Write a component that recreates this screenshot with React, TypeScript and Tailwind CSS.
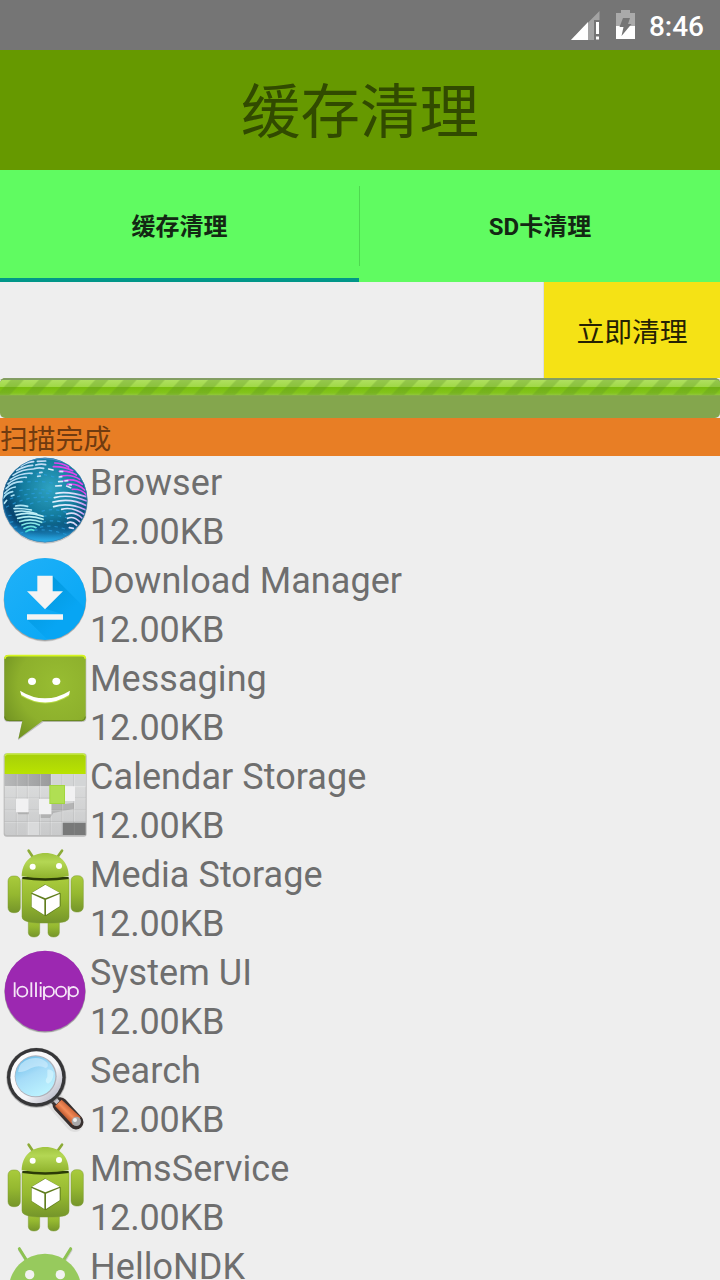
import type { ReactNode } from "react";

function Icon({ children, y = 6 }: { children: ReactNode; y?: number }) {
  return (
    <svg className="h-[98px] w-[90px] shrink-0" viewBox={`0 ${y} 270 294`}>
      {children}
    </svg>
  );
}

function Globe() {
  return (
    <Icon>
      <defs>
        <radialGradient id="globe" cx="0.56" cy="0.36" r="0.66">
          <stop offset="0" stopColor="#2fa3c2" />
          <stop offset="0.5" stopColor="#147c9e" />
          <stop offset="0.82" stopColor="#07456f" />
          <stop offset="1" stopColor="#1470ae" />
        </radialGradient>
        <linearGradient id="globeGlow" x1="0" y1="0" x2="0" y2="1">
          <stop offset="0.78" stopColor="#1c8fd0" stopOpacity="0" />
          <stop offset="1" stopColor="#2cb4ee" />
        </linearGradient>
        <linearGradient id="landWest" gradientUnits="userSpaceOnUse" x1="90" y1="20" x2="70" y2="240">
          <stop offset="0" stopColor="#c5dcf5" />
          <stop offset="0.5" stopColor="#a5e0f4" />
          <stop offset="0.75" stopColor="#c2f0f6" />
          <stop offset="1" stopColor="#2fdccf" />
        </linearGradient>
        <linearGradient id="landEast" gradientUnits="userSpaceOnUse" x1="160" y1="0" x2="262" y2="0">
          <stop offset="0" stopColor="#e2f4ff" />
          <stop offset="0.6" stopColor="#dcdcfa" />
          <stop offset="1" stopColor="#c387f2" />
        </linearGradient>
        <clipPath id="globeClip"><circle cx="135" cy="138" r="126" /></clipPath>
      </defs>
      <circle cx="135" cy="141" r="128" fill="#000" opacity="0.18" />
      <circle cx="135" cy="138" r="127" fill="url(#globe)" />
      <circle cx="135" cy="138" r="127" fill="url(#globeGlow)" />
      <g clipPath="url(#globeClip)" fill="none">
        <g stroke="#2a9fe0" strokeWidth="3.5" strokeDasharray="10 12" opacity="0.7">
          <path d="M66 62Q130 52 200 82M60 86Q130 76 170 92M58 110Q120 98 165 116M18 160Q90 120 160 132M30 135Q100 110 160 120M90 150Q130 136 160 146" />
          <path d="M125 172Q160 160 205 177M130 188Q160 178 205 193M128 205Q160 194 205 210M120 220Q155 210 200 227M25 185L48 182M30 205L54 200M42 220L65 217M60 238Q120 215 200 242" />
        </g>
        <path d="M83 18Q135 2 185 20" stroke="#5d9ad8" strokeWidth="9" opacity="0.8" />
        <g stroke="url(#landWest)" strokeWidth="5" strokeLinecap="round">
          <path d="M63 36Q80 24 101 23M50 50Q72 36 98 34M39 64Q67 45 100 45M31 77Q62 55 96 58M24 90Q50 68 79 70M18 104Q38 82 66 83M14 118Q28 101 46 99M10 132Q20 116 38 113M34 126L42 123M13 148L20 139" />
          <path d="M112 22L137 21M107 33Q124 28 137 32M103 44Q116 40 131 43M119 56L126 55M113 67L121 66" />
          <path d="M47 156Q61 152 83 157M42 164Q65 162 94 168M45 173Q75 167 110 179M49 183Q85 172 129 187M53 193Q92 181 129 196M59 203Q93 191 125 205M66 213Q93 201 118 213M72 223Q91 212 108 221M78 233Q91 223 101 229" />
        </g>
        <g stroke="url(#landEast)" strokeWidth="5" strokeLinecap="round">
          <path d="M168 118Q205 111 258 128M163 131Q210 119 260 141M159 144Q212 130 260 155M161 158Q206 144 258 168M185 166Q216 157 252 181M200 180Q224 171 246 192M203 193Q220 185 239 203M202 207Q216 200 230 214M208 221L220 223" />
          <path d="M167 96L184 95M176 83L188 82M200 96L212 101M146 45L159 48" />
        </g>
        <g stroke="#df46ee" strokeWidth="5" strokeLinecap="round">
          <path d="M164 27Q187 27 206 39M160 38Q191 37 218 50M178 52Q207 49 229 63M181 67Q214 59 239 76M192 80Q225 72 247 91M202 91Q234 87 254 108M217 106Q244 104 260 123" />
        </g>
        <path d="M178 52L190 53M176 69L187 68M193 81L205 80M206 92L216 93" stroke="#d9e8ff" strokeWidth="5" />
      </g>
      <circle cx="135" cy="138" r="126" fill="none" stroke="#3a83b5" strokeWidth="2" />
    </Icon>
  );
}

function Download() {
  return (
    <Icon>
      <defs>
        <linearGradient id="dlShade" gradientUnits="userSpaceOnUse" x1="110" y1="100" x2="200" y2="190">
          <stop offset="0" stopColor="#0398dd" />
          <stop offset="1" stopColor="#07a5f3" />
        </linearGradient>
        <linearGradient id="dlBg" x1="0" y1="0" x2="1" y2="1">
          <stop offset="0" stopColor="#21b1f8" />
          <stop offset="1" stopColor="#04a6f5" />
        </linearGradient>
        <clipPath id="dlClip"><circle cx="135" cy="141" r="123" /></clipPath>
      </defs>
      <circle cx="135" cy="145" r="124" fill="#000" opacity="0.14" />
      <circle cx="135" cy="143" r="124" fill="#000" opacity="0.2" />
      <circle cx="135" cy="141" r="123" fill="url(#dlBg)" />
      <g clipPath="url(#dlClip)" fill="url(#dlShade)">
        <path d="M158 71L270 183V260H140L82 203L189 187L135 170L158 118Z" />
      </g>
      <path d="M112 71H158V118H189L135 172L81 118H112Z" fill="#f3f3f3" />
      <path d="M81 187H189V203H81Z" fill="#f3f3f3" />
    </Icon>
  );
}

function Messaging() {
  return (
    <Icon>
      <defs>
        <radialGradient id="msg" cx="0.65" cy="0.35" r="0.8">
          <stop offset="0" stopColor="#98bd32" />
          <stop offset="0.6" stopColor="#8db02c" />
          <stop offset="1" stopColor="#6f9021" />
        </radialGradient>
      </defs>
      <path d="M23 17H247Q259 17 259 29V203Q259 216 246 216H130L54 271L66 216H25Q12 216 12 203V29Q12 17 23 17Z" fill="#000" opacity="0.2" />
      <path d="M24 15H246Q257 15 257 27V201Q257 213 246 213H127L55 267L67 213H25Q13 213 13 201V27Q13 15 24 15Z" fill="url(#msg)" />
      <path d="M15 26Q15 17 26 17H246Q256 17 256 26" fill="none" stroke="#d6f520" strokeWidth="5" />
      <path d="M14 200Q15 212 27 212H67M127 212H245Q256 211 256 200" fill="none" stroke="#64831e" strokeWidth="3" />
      <path d="M61 127Q132 168 210 127L207 139Q136 182 64 139Z" fill="#c6e84a" opacity="0.7" />
      <path d="M60 122Q135 168 210 122L207 135Q136 180 64 135Z" fill="#fff" />
      <ellipse cx="96" cy="94" rx="12" ry="11" fill="#fff" />
      <ellipse cx="169" cy="94" rx="12" ry="11" fill="#fff" />
    </Icon>
  );
}

function Calendar() {
  return (
    <Icon>
      <defs>
        <linearGradient id="calTop" x1="0" y1="0" x2="0" y2="1">
          <stop offset="0" stopColor="#a6cf0a" />
          <stop offset="1" stopColor="#b9e300" />
        </linearGradient>
        <linearGradient id="calGrid" x1="0" y1="0" x2="0" y2="1">
          <stop offset="0" stopColor="#e4e5e5" />
          <stop offset="1" stopColor="#c9cacb" />
        </linearGradient>
        <linearGradient id="calRow" x1="0" y1="0" x2="1" y2="0">
          <stop offset="0" stopColor="#b7b8b9" />
          <stop offset="1" stopColor="#9a9b9c" />
        </linearGradient>
      </defs>
      <rect x="11" y="16" width="249" height="250" rx="9" fill="#000" opacity="0.22" />
      <rect x="14" y="17" width="243" height="244" rx="6" fill="url(#calGrid)" />
      <path d="M14 78H153V115H14Z" fill="url(#calRow)" />
      <path d="M153 78H257V115H153Z" fill="#d3d5d6" />
      <path d="M80 220H118V261H80Z" fill="#d9dadb" />
      <path d="M118 152H152V115L195 168L222 164V182L160 195L150 210H122Z" fill="#999" opacity="0.55" />
      <path d="M51 192H87V199H55Z" fill="#999" opacity="0.6" />
      <g stroke="#fff" strokeOpacity="0.45" strokeWidth="2">
        <path d="M51 79V261M84 79V261M121 79V261M153 79V261M188 79V261M223 79V261M14 116H257M14 152H257M14 188H257M14 223H257" />
      </g>
      <g stroke="#777" strokeOpacity="0.25" strokeWidth="2">
        <path d="M49 79V261M82 79V261M119 79V261M151 79V261M186 79V261M221 79V261M14 150H257M14 186H257M14 221H257" />
      </g>
      <path d="M188 224H257V261H188Z" fill="#787979" />
      <path d="M223 224V261" stroke="#8a8b8b" strokeWidth="2" />
      <path d="M14 78V25Q14 17 23 17H248Q257 17 257 25V78Z" fill="url(#calTop)" />
      <path d="M15 25Q15 18 23 18H248Q256 18 256 25" stroke="#c6ea47" strokeWidth="4" fill="none" />
      <path d="M48 152H85V193H48ZM117 153H154V199H117ZM190 115H225V159H190Z" fill="#f1f1f2" />
      <path d="M148 111H195V168H148Z" fill="#a2d63d" />
      <path d="M151 114H192V165H151Z" fill="#b0df53" />
    </Icon>
  );
}

function Robot({ id }: { id: string }) {
  const body = `url(#body-${id})`;
  return (
    <Icon>
      <defs>
        <linearGradient id={`body-${id}`} x1="0" y1="0" x2="0" y2="1">
          <stop offset="0" stopColor="#a9cb3c" />
          <stop offset="0.5" stopColor="#95b830" />
          <stop offset="1" stopColor="#75952a" />
        </linearGradient>
        <linearGradient id={`head-${id}`} x1="0" y1="0" x2="0" y2="1">
          <stop offset="0" stopColor="#a0c43f" />
          <stop offset="0.35" stopColor="#b4d754" />
          <stop offset="1" stopColor="#8fb22c" />
        </linearGradient>
      </defs>
      <g stroke="#8cab37" strokeWidth="8" strokeLinecap="round">
        <path d="M86 14L98 32M186 14L173 32" />
      </g>
      <g stroke="#7d9a35" strokeWidth="1.5">
        <rect x="24" y="90" width="37" height="110" rx="15" fill={body} />
        <rect x="213" y="89" width="37" height="109" rx="15" fill={body} />
        <path d="M85 212H119V261Q117 273 102 273Q87 273 85 261ZM144 212H178V261Q176 273 161 273Q146 273 144 261Z" fill={body} />
        <path d="M66 98H207V213Q207 223 195 227Q177 232 136 231Q95 232 77 225Q66 221 66 212Z" fill={body} />
      </g>
      <path d="M67 99Q135 110 206 99V93H67Z" fill="#2b3b07" />
      <path d="M65 91C65 49 94 21 136 21S206 49 206 91Q171 97 136 97T65 91Z" fill={`url(#head-${id})`} />
      <circle cx="98" cy="62" r="9" fill="#fff" />
      <circle cx="177" cy="60" r="9" fill="#fff" />
      <path d="M135 115L182 142V181L137 211L94 184V141Z" fill="#617e1f" />
      <path d="M136 116L179 140L136 157L96 140ZM95 144L133 161V207L95 183ZM138 161L179 144V181L138 207Z" fill="#fff" />
    </Icon>
  );
}

function Lollipop() {
  return (
    <Icon>
      <circle cx="135" cy="145" r="122" fill="#000" opacity="0.14" />
      <circle cx="135" cy="143" r="122" fill="#000" opacity="0.22" />
      <circle cx="135" cy="141" r="121" fill="#9c28b1" />
      <g stroke="#f5e6f7" strokeWidth="5.5" fill="none">
        <path d="M44 115V159M94 115V159M108 115V159M122 127V159M122 114V120M132 127V168M206 127V168" />
        <circle cx="67" cy="143" r="15" />
        <circle cx="147" cy="143" r="15" />
        <circle cx="183" cy="143" r="15" />
        <circle cx="220" cy="143" r="14" />
      </g>
    </Icon>
  );
}

function Magnifier() {
  return (
    <Icon>
      <defs>
        <linearGradient id="lens" x1="0.2" y1="0" x2="0.7" y2="1">
          <stop offset="0" stopColor="#69bde9" />
          <stop offset="0.45" stopColor="#a6dcf8" />
          <stop offset="1" stopColor="#bdf4ff" />
        </linearGradient>
        <linearGradient id="rim" x1="0" y1="0" x2="1" y2="1">
          <stop offset="0" stopColor="#fff" />
          <stop offset="0.6" stopColor="#f4f4f7" />
          <stop offset="1" stopColor="#a6a7b8" />
        </linearGradient>
        <linearGradient id="handle" x1="0" y1="1" x2="1" y2="0">
          <stop offset="0.3" stopColor="#a9441d" />
          <stop offset="0.5" stopColor="#f58c59" />
          <stop offset="0.7" stopColor="#bd552b" />
        </linearGradient>
      </defs>
      <path d="M157 167L224 243" stroke="#777" strokeWidth="54" strokeLinecap="round" opacity="0.12" />
      <path d="M157 165L165 174" stroke="#393739" strokeWidth="30" strokeLinecap="round" />
      <path d="M180 188L228 240" stroke="#38302f" strokeWidth="45" strokeLinecap="round" />
      <path d="M150 158L174 182" stroke="#c6c5cb" strokeWidth="14" />
      <path d="M165 192L185 173L242 226L219 250Z" fill="url(#handle)" />
      <circle cx="229" cy="238" r="14" fill="#aaa9aa" />
      <circle cx="225" cy="234" r="6" fill="#eee" />
      <circle cx="109" cy="107" r="90" fill="#777" opacity="0.5" />
      <circle cx="109" cy="106" r="88" fill="#363638" />
      <circle cx="109" cy="106" r="78" fill="url(#rim)" />
      <circle cx="107" cy="103" r="63" fill="#b0b0b8" />
      <circle cx="106" cy="103" r="60" fill="url(#lens)" />
      <path d="M54 89Q58 59 89 50Q122 42 142 63Q147 75 137 78Q118 68 94 78Q68 93 54 89Z" fill="#d3effd" opacity="0.6" />
      <path d="M142 83Q157 81 161 94Q159 119 144 125Q131 119 142 104Z" fill="#e5fbff" opacity="0.5" />
    </Icon>
  );
}

function FlatRobot() {
  return (
    <Icon y={30}>
      <path d="M58 57L79 90M212 57L192 90" stroke="#777" strokeWidth="9" strokeLinecap="round" opacity="0.3" transform="translate(1 3)" />
      <path d="M58 56L79 90M212 56L191 90" stroke="#8dc252" strokeWidth="9" strokeLinecap="round" />
      <path d="M26 180A109 109 0 0 1 244 180Z" fill="#97ca5d" />
      <circle cx="89" cy="134" r="14" fill="#f2f2f2" />
      <circle cx="181" cy="134" r="14" fill="#f2f2f2" />
    </Icon>
  );
}

const apps = [
  { name: "Browser", icon: <Globe /> },
  { name: "Download Manager", icon: <Download /> },
  { name: "Messaging", icon: <Messaging /> },
  { name: "Calendar Storage", icon: <Calendar /> },
  { name: "Media Storage", icon: <Robot id="media" /> },
  { name: "System UI", icon: <Lollipop /> },
  { name: "Search", icon: <Magnifier /> },
  { name: "MmsService", icon: <Robot id="mms" /> },
  { name: "HelloNDK", icon: <FlatRobot /> },
];

function StatusBar() {
  return (
    <div className="flex h-[50px] shrink-0 items-center justify-end bg-[#757575] pr-4 text-white">
      <svg className="mr-[15px] h-[50px] w-[30px]" viewBox="570 0 30 50">
        <path d="M599.5 11V20H594V40H571Z" fill="#a3a3a3" />
        <path d="M588 22V40H571Z" fill="#fff" />
        <path d="M596 22H599V34H596ZM596 36.5H599V39.5H596Z" fill="#fff" />
      </svg>
      <svg className="mr-[14px] h-[50px] w-[20px]" viewBox="615 0 20 50">
        <path d="M621 10H630V13H635V26H616V13H621Z" fill="#aaa" />
        <path d="M616 26H635V39H616Z" fill="#fff" />
        <path d="M623 18H630L628 24H631.5L621.5 36L623.5 27H619.5Z" fill="#757575" />
      </svg>
      <span className="pt-1 text-[28px] leading-8 font-medium">8:46</span>
    </div>
  );
}

function ProgressBar() {
  return (
    <svg className="block h-10 w-full shrink-0" viewBox="0 0 720 40">
      <defs>
        <linearGradient id="barLight" x1="0" y1="0" x2="0" y2="1">
          <stop offset="0" stopColor="#b0e060" />
          <stop offset="1" stopColor="#9fd846" />
        </linearGradient>
        <linearGradient id="barDark" x1="0" y1="0" x2="0" y2="1">
          <stop offset="0" stopColor="#78bd0e" />
          <stop offset="0.7" stopColor="#83c41c" />
          <stop offset="1" stopColor="#92c83e" />
        </linearGradient>
        <pattern id="stripes" width="28.2" height="16" x="-4" y="1.5" patternUnits="userSpaceOnUse">
          <path d="M0 16L15 0H28.2L13.2 16ZM28.2 0L28.2 0" fill="#5e9426" fillOpacity="0.32" />
        </pattern>
      </defs>
      <rect width="720" height="40" rx="5" fill="#84a64d" />
      <path d="M5 0H715L720 2H0Z" fill="#849e64" />
      <path d="M2 2H718L720 4V9H0V4Z" fill="url(#barLight)" />
      <path d="M0 9H720V17.3H0Z" fill="url(#barDark)" />
      <path d="M0 1.5H720V17.3H0Z" fill="url(#stripes)" />
    </svg>
  );
}

export default function App() {
  return (
    <div className="flex h-[1280px] w-[720px] flex-col overflow-hidden bg-[#eeeeee] font-['Roboto','Noto_Sans_CJK_SC',sans-serif]">
      <StatusBar />
      <header className="flex h-[120px] shrink-0 items-center justify-center bg-[#669900] pt-2 text-[59.5px] leading-none text-[#314a00]">
        <h1>缓存清理</h1>
      </header>
      <nav className="flex h-28 shrink-0 bg-[#60fb61] text-2xl font-bold text-[#132813]">
        <div className="flex w-[359px] items-center justify-center border-b-4 border-[#009688] pt-1.5">缓存清理</div>
        <div className="my-4 w-px bg-[#4fd850]" />
        <div className="flex flex-1 items-center justify-center pt-0.5">SD卡清理</div>
      </nav>
      <div className="flex h-24 shrink-0 justify-end">
        <button className="w-[177px] border-l border-[#dcdce2] bg-[#f5e215] pt-1.5 text-[27.8px] text-[#252203]">立即清理</button>
      </div>
      <ProgressBar />
      <div className="flex h-[38px] shrink-0 items-center bg-[#e87e25] pt-1.5 text-[27.8px] leading-none text-[#703b10]">扫描完成</div>
      <ul className="flex flex-col">
        {apps.map((app) => (
          <li key={app.name} className="flex h-[98px] shrink-0">
            {app.icon}
            <div className="flex flex-col text-4xl text-[#6e6e6e]">
              <span className="h-[49px] leading-[54px] tracking-[0.06px]">{app.name}</span>
              <span className="h-[49px] leading-[54px] tracking-[-0.15px]">12.00KB</span>
            </div>
          </li>
        ))}
      </ul>
    </div>
  );
}
